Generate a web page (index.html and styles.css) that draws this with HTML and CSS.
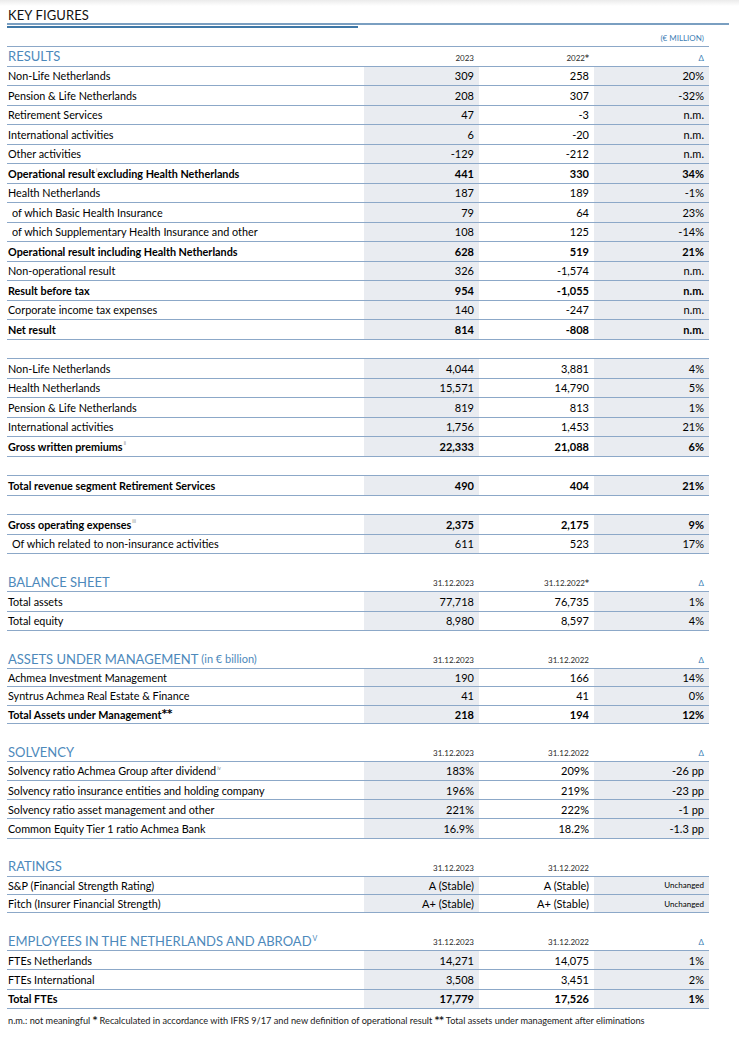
FILE: index.html
```html
<!DOCTYPE html>
<html lang="en">
<head>
<meta charset="utf-8">
<title>Key figures</title>
<link rel="stylesheet" href="styles.css">
</head>
<body>
<div class="page">
  <div class="title">KEY FIGURES</div>
  <div class="rule-thin"></div>
  <div class="rule-thick"></div>

  <div class="row unit"><div></div><div></div><div></div><div class="c ch blue">(€ MILLION)</div></div>

  <div class="row head">
    <div class="lbl sec">RESULTS</div><div class="c ch">2023</div><div class="c ch">2022<span class="ast">*</span></div><div class="c ch blue">Δ</div>
  </div>
  <div class="row"><div class="lbl">Non-Life Netherlands</div><div class="c s">309</div><div class="c">258</div><div class="c s">20%</div></div>
  <div class="row"><div class="lbl">Pension &amp; Life Netherlands</div><div class="c s">208</div><div class="c">307</div><div class="c s">-32%</div></div>
  <div class="row"><div class="lbl">Retirement Services</div><div class="c s">47</div><div class="c">-3</div><div class="c s">n.m.</div></div>
  <div class="row"><div class="lbl">International activities</div><div class="c s">6</div><div class="c">-20</div><div class="c s">n.m.</div></div>
  <div class="row"><div class="lbl">Other activities</div><div class="c s">-129</div><div class="c">-212</div><div class="c s">n.m.</div></div>
  <div class="row bold"><div class="lbl">Operational result<sup class="fn">i</sup> excluding Health Netherlands</div><div class="c s">441</div><div class="c">330</div><div class="c s">34%</div></div>
  <div class="row"><div class="lbl">Health Netherlands</div><div class="c s">187</div><div class="c">189</div><div class="c s">-1%</div></div>
  <div class="row"><div class="lbl ind">of which Basic Health Insurance</div><div class="c s">79</div><div class="c">64</div><div class="c s">23%</div></div>
  <div class="row"><div class="lbl ind">of which Supplementary Health Insurance and other</div><div class="c s">108</div><div class="c">125</div><div class="c s">-14%</div></div>
  <div class="row bold"><div class="lbl">Operational result including Health Netherlands</div><div class="c s">628</div><div class="c">519</div><div class="c s">21%</div></div>
  <div class="row"><div class="lbl">Non-operational result</div><div class="c s">326</div><div class="c">-1,574</div><div class="c s">n.m.</div></div>
  <div class="row bold"><div class="lbl">Result before tax</div><div class="c s">954</div><div class="c">-1,055</div><div class="c s">n.m.</div></div>
  <div class="row"><div class="lbl">Corporate income tax expenses</div><div class="c s">140</div><div class="c">-247</div><div class="c s">n.m.</div></div>
  <div class="row bold"><div class="lbl">Net result</div><div class="c s">814</div><div class="c">-808</div><div class="c s">n.m.</div></div>

  <div class="row spacer"></div>
  <div class="row"><div class="lbl">Non-Life Netherlands</div><div class="c s">4,044</div><div class="c">3,881</div><div class="c s">4%</div></div>
  <div class="row"><div class="lbl">Health Netherlands</div><div class="c s">15,571</div><div class="c">14,790</div><div class="c s">5%</div></div>
  <div class="row"><div class="lbl">Pension &amp; Life Netherlands</div><div class="c s">819</div><div class="c">813</div><div class="c s">1%</div></div>
  <div class="row"><div class="lbl">International activities</div><div class="c s">1,756</div><div class="c">1,453</div><div class="c s">21%</div></div>
  <div class="row bold"><div class="lbl">Gross written premiums<sup class="fn">ii</sup></div><div class="c s">22,333</div><div class="c">21,088</div><div class="c s">6%</div></div>

  <div class="row spacer"></div>
  <div class="row bold"><div class="lbl">Total revenue segment Retirement Services</div><div class="c s">490</div><div class="c">404</div><div class="c s">21%</div></div>

  <div class="row spacer"></div>
  <div class="row bold"><div class="lbl">Gross operating expenses<sup class="fn">iii</sup></div><div class="c s">2,375</div><div class="c">2,175</div><div class="c s">9%</div></div>
  <div class="row"><div class="lbl ind">Of which related to non-insurance activities</div><div class="c s">611</div><div class="c">523</div><div class="c s">17%</div></div>

  <div class="section">
    <div class="row head"><div class="lbl sec">BALANCE SHEET</div><div class="c ch">31.12.2023</div><div class="c ch">31.12.2022<span class="ast">*</span></div><div class="c ch blue">Δ</div></div>
    <div class="row"><div class="lbl">Total assets</div><div class="c s">77,718</div><div class="c">76,735</div><div class="c s">1%</div></div>
    <div class="row"><div class="lbl">Total equity</div><div class="c s">8,980</div><div class="c">8,597</div><div class="c s">4%</div></div>
  </div>

  <div class="section compact">
    <div class="row head"><div class="lbl sec">ASSETS UNDER MANAGEMENT <span class="sub">(in € billion)</span></div><div class="c ch">31.12.2023</div><div class="c ch">31.12.2022</div><div class="c ch blue">Δ</div></div>
    <div class="row"><div class="lbl">Achmea Investment Management</div><div class="c s">190</div><div class="c">166</div><div class="c s">14%</div></div>
    <div class="row"><div class="lbl">Syntrus Achmea Real Estate &amp; Finance</div><div class="c s">41</div><div class="c">41</div><div class="c s">0%</div></div>
    <div class="row bold"><div class="lbl">Total Assets under Management<span class="ast">**</span></div><div class="c s">218</div><div class="c">194</div><div class="c s">12%</div></div>
  </div>

  <div class="section mid">
    <div class="row head"><div class="lbl sec">SOLVENCY</div><div class="c ch">31.12.2023</div><div class="c ch">31.12.2022</div><div class="c ch blue">Δ</div></div>
    <div class="row"><div class="lbl">Solvency ratio Achmea Group after dividend<sup class="fn">iv</sup></div><div class="c s">183%</div><div class="c">209%</div><div class="c s">-26 pp</div></div>
    <div class="row"><div class="lbl">Solvency ratio insurance entities and holding company</div><div class="c s">196%</div><div class="c">219%</div><div class="c s">-23 pp</div></div>
    <div class="row"><div class="lbl">Solvency ratio asset management and other</div><div class="c s">221%</div><div class="c">222%</div><div class="c s">-1 pp</div></div>
    <div class="row"><div class="lbl">Common Equity Tier 1 ratio Achmea Bank</div><div class="c s">16.9%</div><div class="c">18.2%</div><div class="c s">-1.3 pp</div></div>
  </div>

  <div class="section compact">
    <div class="row head"><div class="lbl sec">RATINGS</div><div class="c ch">31.12.2023</div><div class="c ch">31.12.2022</div><div class="c ch"></div></div>
    <div class="row"><div class="lbl">S&amp;P (Financial Strength Rating)</div><div class="c s">A (Stable)</div><div class="c">A (Stable)</div><div class="c s small">Unchanged</div></div>
    <div class="row"><div class="lbl">Fitch (Insurer Financial Strength)</div><div class="c s">A+ (Stable)</div><div class="c">A+ (Stable)</div><div class="c s small">Unchanged</div></div>
  </div>

  <div class="section mid">
    <div class="row head"><div class="lbl sec">EMPLOYEES IN THE NETHERLANDS AND ABROAD<sup class="fn blue">V</sup></div><div class="c ch">31.12.2023</div><div class="c ch">31.12.2022</div><div class="c ch blue">Δ</div></div>
    <div class="row"><div class="lbl">FTEs Netherlands</div><div class="c s">14,271</div><div class="c">14,075</div><div class="c s">1%</div></div>
    <div class="row"><div class="lbl">FTEs International</div><div class="c s">3,508</div><div class="c">3,451</div><div class="c s">2%</div></div>
    <div class="row bold"><div class="lbl">Total FTEs</div><div class="c s">17,779</div><div class="c">17,526</div><div class="c s">1%</div></div>
  </div>

  <p class="note">n.m.: not meaningful <span class="ast">*</span> Recalculated in accordance with IFRS 9/17 and new definition of operational result <span class="ast">**</span> Total assets under management after eliminations</p>
</div>
</body>
</html>
```

FILE: styles.css
```css
html, body {
  margin: 0;
  padding: 0;
}
body {
  background: linear-gradient(#ebebeb, #ffffff 6px) no-repeat #ffffff;
  font-family: Lato, "Open Sans", Arial, sans-serif;
  color: #000000;
}
.page {
  padding: 7px 0 0 7px;
}
.title {
  font-size: 13px;
  line-height: 16px;
  padding-left: 1px;
  color: #111111;
  letter-spacing: 0.1px;
}
.rule-thin {
  width: 722px;
  height: 2px;
  background: #7a9fc1;
}
.rule-thick {
  width: 351px;
  height: 2px;
  margin-top: 1px;
  background: #3f78a7;
}
.row {
  display: grid;
  grid-template-columns: 357px 115px 115px 115px;
  width: 702px;
  height: 19.5px;
  box-sizing: border-box;
  border-bottom: 1px solid #8ca8c8;
  font-size: 10.8px;
}
.row.unit {
  height: 19px;
}
.row > div {
  display: flex;
  align-items: center;
  white-space: nowrap;
}
.lbl {
  padding-left: 1px;
}
.lbl.ind {
  padding-left: 5px;
}
.c {
  justify-content: flex-end;
  padding-right: 5px;
  font-size: 11px;
}
.s {
  background: #e9ecf1;
}
.bold {
  font-weight: 700;
}
.row.spacer {
  height: 19.5px;
}
.row.head > .ch,
.row.unit > .ch {
  align-items: flex-end;
  padding-bottom: 3px;
  box-sizing: border-box;
  font-size: 8px;
  color: #2a2a2a;
}
.blue,
.row.head > .ch.blue,
.row.unit > .ch.blue {
  color: #3f7fb6;
}
.sec {
  font-size: 13px;
  color: #4d89bb;
}
.sec .sub {
  font-size: 11px;
  margin-left: 3px;
}
.ast {
  font-family: "DejaVu Sans", sans-serif;
  font-size: 0.95em;
  font-weight: 700;
  position: relative;
  top: -1px;
}
.fn {
  font-size: 5px;
  font-weight: 400;
  color: #8c8c8c;
  align-self: flex-start;
  position: relative;
  top: 3px;
  margin-left: 1px;
}
.sec .fn {
  font-size: 7px;
  color: #4d89bb;
  top: 2px;
}
.c.small {
  font-size: 8px;
}
.section {
  margin-top: 18.5px;
}
.section.compact .row:not(.head) {
  height: 18.3px;
}
.section.mid .row:not(.head) {
  height: 19.2px;
}
.note {
  margin: 6px 0 0 1px;
  font-size: 9.2px;
  line-height: 12px;
  color: #1a1a1a;
}
```
